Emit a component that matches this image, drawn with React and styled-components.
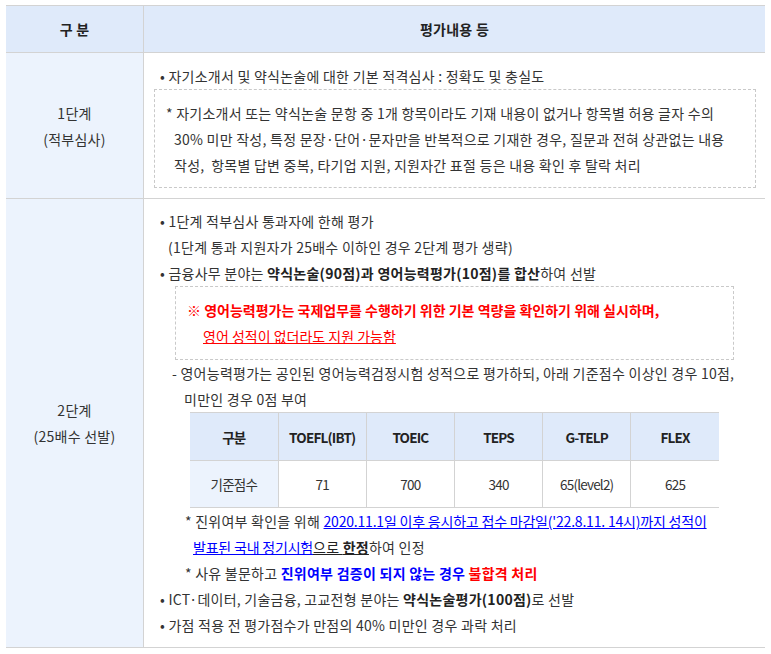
import React from "react";
import styled, { createGlobalStyle } from "styled-components";

const GlobalStyle = createGlobalStyle`
  body {
    margin: 0;
    background: #fff;
    font-family: "Noto Sans CJK KR", "Noto Sans", sans-serif;
    font-size: 14px;
    letter-spacing: 0.25px;
    color: #333;
  }
`;

const Wrap = styled.div`
  padding: 5px 6px;
`;

const Table = styled.table`
  width: 759px;
  border-collapse: collapse;
  border-top: 1px solid #d3d3d3;
  border-bottom: 1px solid #d3d3d3;
  table-layout: fixed;
`;

const HeadCell = styled.th`
  height: 46px;
  padding: 0;
  background: #dfeafa;
  color: #222;
  font-weight: bold;
  text-align: center;
  border-bottom: 1px solid #d3d3d3;
  border-left: ${(p) => (p.first ? "none" : "1px solid #d3d3d3")};
  width: ${(p) => (p.first ? "137px" : "auto")};
`;

const LabelCell = styled.td`
  background: #ecf3fd;
  text-align: center;
  vertical-align: middle;
  line-height: 26px;
  border-right: 1px solid #d3d3d3;
  border-bottom: 1px solid #d3d3d3;
  padding: 0;
`;

const ContentCell = styled.td`
  padding: ${(p) => p.pad};
  vertical-align: top;
  line-height: 26px;
  border-bottom: 1px solid #d3d3d3;
`;

const Line = styled.div`
  padding-left: ${(p) => p.indent || 0}px;
  white-space: nowrap;
`;

const DashedBox = styled.div`
  border: 1px dashed #c9c9c9;
  margin: ${(p) => p.margin};
  padding: ${(p) => p.pad};
`;

const B = styled.b`
  font-weight: bold;
  color: ${(p) => p.color || "#222"};
`;

const U = styled.span`
  text-decoration: underline;
  color: ${(p) => p.color || "inherit"};
  font-weight: ${(p) => (p.bold ? "bold" : "normal")};
`;

const LinkText = styled(U)`
  color: #0000ff;
  letter-spacing: -0.2px;
`;

const Red = styled.span`
  color: #ff0000;
  font-weight: bold;
  letter-spacing: 0;
`;

const ScoreTable = styled.table`
  width: 529px;
  margin: 0 0 0 36px;
  border-collapse: collapse;
  table-layout: fixed;
  border-top: 1px solid #d3d3d3;
  border-bottom: 1px solid #d3d3d3;
  font-size: 13.5px;
  letter-spacing: -0.8px;
`;

const ScoreHead = styled.th`
  height: 47px;
  padding: 0;
  background: #dfeafa;
  color: #222;
  font-weight: bold;
  text-align: center;
  border-left: ${(p) => (p.first ? "none" : "1px solid #d3d3d3")};
  border-bottom: 1px solid #d3d3d3;
`;

const ScoreCell = styled.td`
  height: 46px;
  padding: 0;
  background: ${(p) => (p.first ? "#ecf3fd" : "#fff")};
  text-align: center;
  border-left: ${(p) => (p.first ? "none" : "1px solid #d3d3d3")};
`;

const exams = ["TOEFL(IBT)", "TOEIC", "TEPS", "G-TELP", "FLEX"];
const scores = ["71", "700", "340", "65(level2)", "625"];

export default function App() {
  return (
    <Wrap>
      <GlobalStyle />
      <Table>
        <thead>
          <tr>
            <HeadCell first>구 분</HeadCell>
            <HeadCell>평가내용 등</HeadCell>
          </tr>
        </thead>
        <tbody>
          <tr>
            <LabelCell>
              1단계
              <br />
              (적부심사)
            </LabelCell>
            <ContentCell pad="10px 9px 10px 10px">
              <Line indent={6}>• 자기소개서 및 약식논술에 대한 기본 적격심사 : 정확도 및 충실도</Line>
              <DashedBox margin="0" pad="10px 0 9px 11px">
                <Line>* 자기소개서 또는 약식논술 문항 중 1개 항목이라도 기재 내용이 없거나 항목별 허용 글자 수의</Line>
                <Line indent={8}>30% 미만 작성, 특정 문장·단어·문자만을 반복적으로 기재한 경우, 질문과 전혀 상관없는 내용</Line>
                <Line indent={8}>작성,&nbsp; 항목별 답변 중복, 타기업 지원, 지원자간 표절 등은 내용 확인 후 탈락 처리</Line>
              </DashedBox>
            </ContentCell>
          </tr>
          <tr>
            <LabelCell>
              2단계
              <br />
              (25배수 선발)
            </LabelCell>
            <ContentCell pad="9px 31px 9px 10px">
              <Line indent={6}>• 1단계 적부심사 통과자에 한해 평가</Line>
              <Line indent={14}>(1단계 통과 지원자가 25배수 이하인 경우 2단계 평가 생략)</Line>
              <Line indent={6}>
                • 금융사무 분야는 <B>약식논술(90점)과 영어능력평가(10점)를 합산</B>하여 선발
              </Line>
              <DashedBox margin="0 0 0 21px" pad="10px 0 10px 11px">
                <Line>
                  <Red>※ 영어능력평가는 국제업무를 수행하기 위한 기본 역량을 확인하기 위해 실시하며,</Red>
                </Line>
                <Line indent={16}>
                  <Red>
                    <U>영어 성적이 없더라도 지원 가능함</U>
                  </Red>
                </Line>
              </DashedBox>
              <Line indent={18}>- 영어능력평가는 공인된 영어능력검정시험 성적으로 평가하되, 아래 기준점수 이상인 경우 10점,</Line>
              <Line indent={30}>미만인 경우 0점 부여</Line>
              <ScoreTable>
                <thead>
                  <tr>
                    <ScoreHead first>구분</ScoreHead>
                    {exams.map((e) => (
                      <ScoreHead key={e}>{e}</ScoreHead>
                    ))}
                  </tr>
                </thead>
                <tbody>
                  <tr>
                    <ScoreCell first>기준점수</ScoreCell>
                    {scores.map((s) => (
                      <ScoreCell key={s}>{s}</ScoreCell>
                    ))}
                  </tr>
                </tbody>
              </ScoreTable>
              <Line indent={31}>
                * 진위여부 확인을 위해{" "}
                <LinkText>2020.11.1일 이후 응시하고 접수 마감일('22.8.11. 14시)까지 성적이</LinkText>
              </Line>
              <Line indent={39}>
                <LinkText>발표된 국내 정기시험</LinkText>
                <U color="#222">
                  으로 <B>한정</B>
                </U>
                하여 인정
              </Line>
              <Line indent={31}>
                * 사유 불문하고 <B color="#0000ff">진위여부 검증이 되지 않는 경우</B> <B color="#ff0000">불합격 처리</B>
              </Line>
              <Line indent={6}>
                • ICT·데이터, 기술금융, 고교전형 분야는 <B>약식논술평가(100점)</B>로 선발
              </Line>
              <Line indent={6}>• 가점 적용 전 평가점수가 만점의 40% 미만인 경우 과락 처리</Line>
            </ContentCell>
          </tr>
        </tbody>
      </Table>
    </Wrap>
  );
}
